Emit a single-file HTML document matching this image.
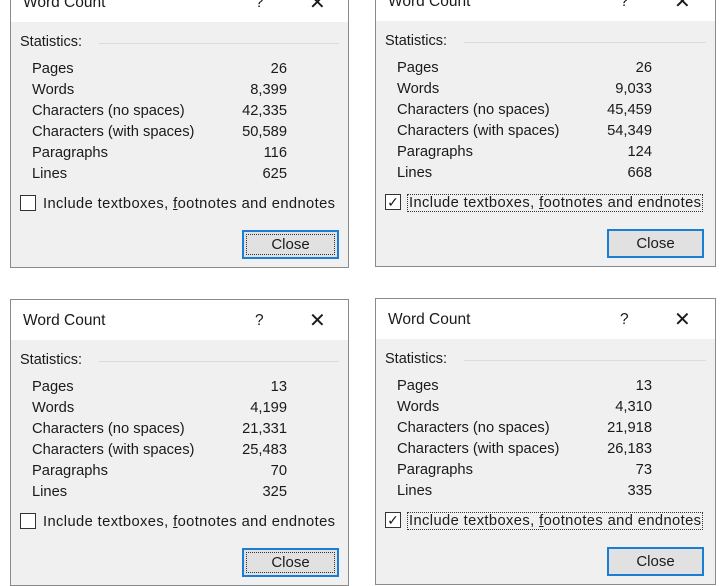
<!DOCTYPE html>
<html><head><style>
body{margin:0;width:728px;height:570px;background:#fff;position:relative;overflow:hidden;font-family:"Liberation Sans",sans-serif;color:#1a1a1a}
.d{position:absolute;width:339px;height:287px;background:#f0f0f0;border:1px solid #8a8a8a;box-sizing:border-box}
.t{position:absolute;left:0;top:0;right:0;height:40px;background:#fff}
.t span{position:absolute;top:12px;font-size:15.5px}
.s{position:absolute;left:9px;top:52px;font-size:14.5px}
.hr{position:absolute;left:88px;right:9px;top:61px;border-top:1px solid #dcdcdc}
.r{position:absolute;left:21px;width:255px;font-size:14.7px;height:18px}
.r b{font-weight:normal;position:absolute;right:0;top:0}
.cb{position:absolute;left:9px;top:213px;width:16px;height:16px;border:1px solid #333;background:#fff;box-sizing:border-box}
.cl{position:absolute;left:31px;top:214px;font-size:14.7px;letter-spacing:0.4px;padding:0 1px}
.btn{position:absolute;left:231px;top:248px;width:97px;height:29px;border:2px solid #1a7fd4;background:#e1e1e1;box-sizing:border-box;font-size:15px;text-align:center;line-height:25px}
.btn i{position:absolute;left:2px;top:2px;right:2px;bottom:2px;border:1px dotted #333}
</style></head><body>

<div class="d" style="left:10px;top:-19px">
<div class="t"><span style="left:12px">Word Count</span><span style="left:244px">?</span><span style="left:298px;font-size:20px;top:8px">✕</span></div>
<div class="s">Statistics:</div><div class="hr"></div>
<div class="r" style="top:79px">Pages<b>26</b></div>
<div class="r" style="top:100px">Words<b>8,399</b></div>
<div class="r" style="top:121px">Characters (no spaces)<b>42,335</b></div>
<div class="r" style="top:142px">Characters (with spaces)<b>50,589</b></div>
<div class="r" style="top:163px">Paragraphs<b>116</b></div>
<div class="r" style="top:184px">Lines<b>625</b></div>
<div class="cb"></div><div class="cl">Include textboxes, <u>f</u>ootnotes and endnotes</div>
<div class="btn"><i></i>Close</div>
</div>

<div class="d" style="left:375px;top:-20px;width:341px">
<div class="t"><span style="left:12px">Word Count</span><span style="left:244px">?</span><span style="left:298px;font-size:20px;top:8px">✕</span></div>
<div class="s">Statistics:</div><div class="hr"></div>
<div class="r" style="top:79px">Pages<b>26</b></div>
<div class="r" style="top:100px">Words<b>9,033</b></div>
<div class="r" style="top:121px">Characters (no spaces)<b>45,459</b></div>
<div class="r" style="top:142px">Characters (with spaces)<b>54,349</b></div>
<div class="r" style="top:163px">Paragraphs<b>124</b></div>
<div class="r" style="top:184px">Lines<b>668</b></div>
<div class="cb" style="font-size:14px;line-height:14px;text-align:center">✓</div><div class="cl" style="border:1px dotted #333;top:213px">Include textboxes, <u>f</u>ootnotes and endnotes</div>
<div class="btn"><i style="display:none"></i>Close</div>
</div>

<div class="d" style="left:10px;top:299px">
<div class="t"><span style="left:12px">Word Count</span><span style="left:244px">?</span><span style="left:298px;font-size:20px;top:8px">✕</span></div>
<div class="s">Statistics:</div><div class="hr"></div>
<div class="r" style="top:79px">Pages<b>13</b></div>
<div class="r" style="top:100px">Words<b>4,199</b></div>
<div class="r" style="top:121px">Characters (no spaces)<b>21,331</b></div>
<div class="r" style="top:142px">Characters (with spaces)<b>25,483</b></div>
<div class="r" style="top:163px">Paragraphs<b>70</b></div>
<div class="r" style="top:184px">Lines<b>325</b></div>
<div class="cb"></div><div class="cl">Include textboxes, <u>f</u>ootnotes and endnotes</div>
<div class="btn"><i></i>Close</div>
</div>

<div class="d" style="left:375px;top:298px;width:341px">
<div class="t"><span style="left:12px">Word Count</span><span style="left:244px">?</span><span style="left:298px;font-size:20px;top:8px">✕</span></div>
<div class="s">Statistics:</div><div class="hr"></div>
<div class="r" style="top:79px">Pages<b>13</b></div>
<div class="r" style="top:100px">Words<b>4,310</b></div>
<div class="r" style="top:121px">Characters (no spaces)<b>21,918</b></div>
<div class="r" style="top:142px">Characters (with spaces)<b>26,183</b></div>
<div class="r" style="top:163px">Paragraphs<b>73</b></div>
<div class="r" style="top:184px">Lines<b>335</b></div>
<div class="cb" style="font-size:14px;line-height:14px;text-align:center">✓</div><div class="cl" style="border:1px dotted #333;top:213px">Include textboxes, <u>f</u>ootnotes and endnotes</div>
<div class="btn"><i style="display:none"></i>Close</div>
</div>

</body></html>
